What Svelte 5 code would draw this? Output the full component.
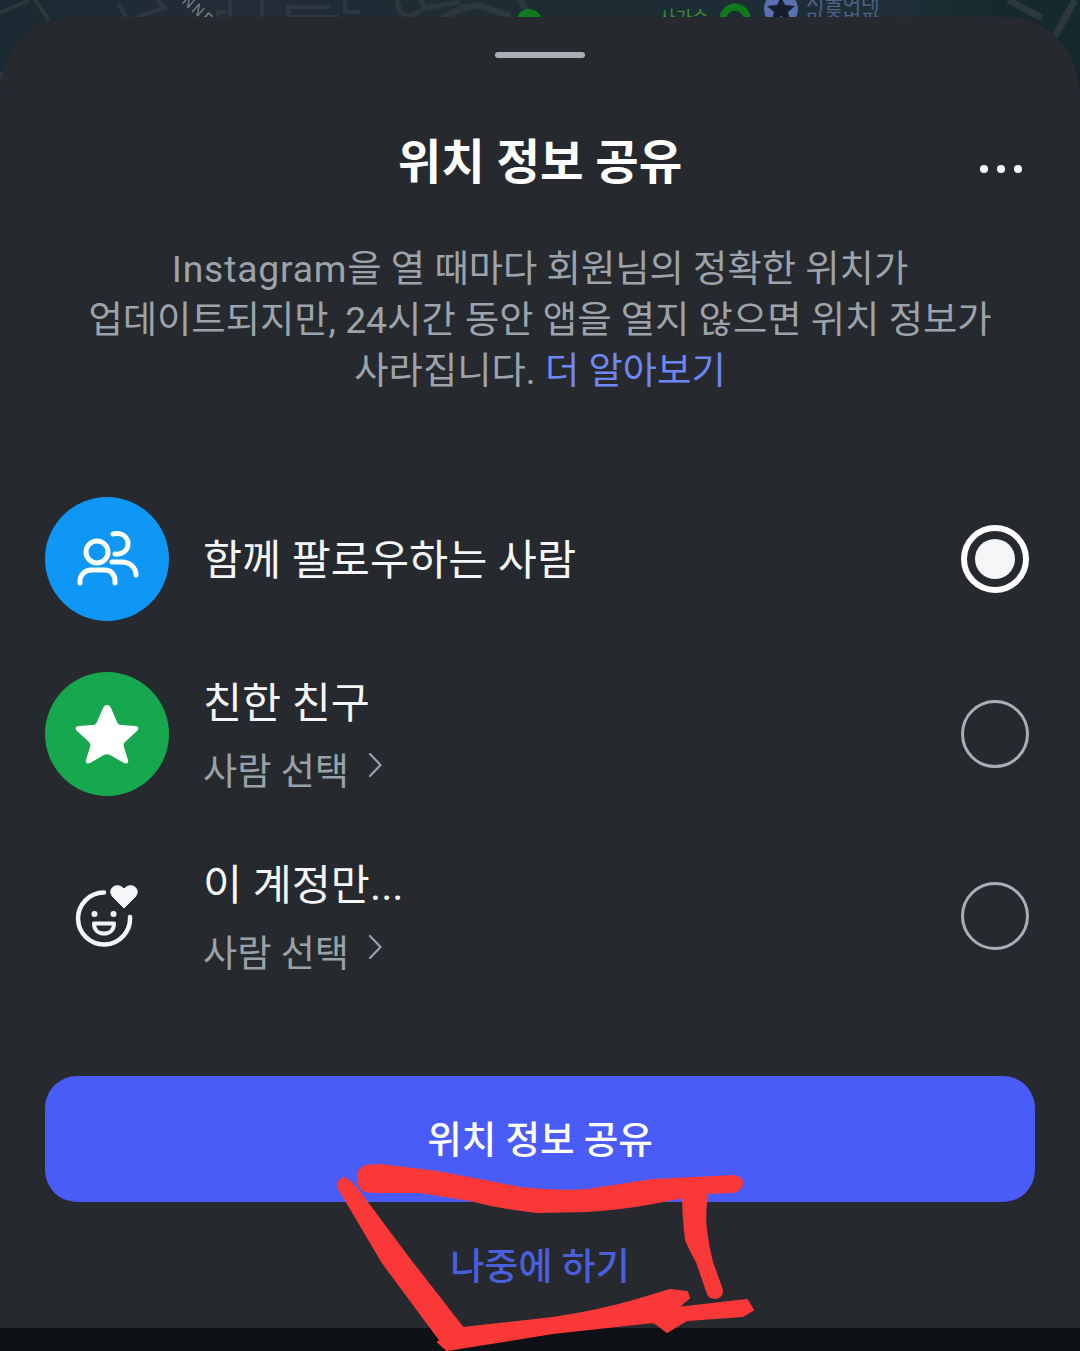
<script>
	const rows = [
		{ title: '함께 팔로우하는 사람', kind: 'people', selected: true },
		{ title: '친한 친구', sub: '사람 선택', kind: 'star' },
		{ title: '이 계정만...', sub: '사람 선택', kind: 'smile' }
	];
</script>

<div class="screen">
	<svg class="map" width="1080" height="110" viewBox="0 0 1080 110" fill="none">
		<defs>
			<linearGradient id="ground">
				<stop offset="0" stop-color="#1b2a32" />
				<stop offset="0.2" stop-color="#222c37" />
				<stop offset="0.5" stop-color="#1d2c33" />
				<stop offset="0.84" stop-color="#1f2e37" />
				<stop offset="0.93" stop-color="#15292c" />
			</linearGradient>
		</defs>
		<rect width="1080" height="110" fill="url(#ground)" />
		<g stroke="#2c3740" stroke-width="4">
			<path d="M0 13 L30 0 M35 0 L52 25 M0 72 L8 92" />
			<path d="M118 4 L128 20 L165 8 L157 0 M118 22 L128 20" />
			<path d="M218 20 V12 H226 M230 0 V20 M262 0 V20 M288 4 V20 M288 7 H330 M288 17 H340 M345 0 V12 H360" />
			<path d="M397 0 L400 12 L410 17 L425 8 L420 0 M425 8 L460 2" stroke-width="5" />
			<path d="M440 20 Q465 4 480 6 L510 16" stroke-width="7" />
			<path d="M520 0 L528 12" stroke-width="7" />
			<path d="M1008 0 L1042 18 M1075 0 L1050 45" stroke-width="7" />
		</g>
		<text class="maplabel road" transform="translate(181 2) rotate(42)">NNE</text>
		<path d="M516 22 A13 13 0 0 1 542 22 Z" fill="#117a1e" />
		<circle cx="735" cy="19" r="12" stroke="#117a1e" stroke-width="7" />
		<circle cx="781" cy="9" r="17" fill="#5a70b0" />
		<path d="M781 -3 L785 5 L795 6 L788 12 L790 21 L781 16 L772 21 L774 12 L767 6 L777 5 Z" fill="#141e2c" />
		<text class="maplabel green" x="659" y="24">사가슨</text>
		<text class="maplabel blue" x="806" y="9">서울여대</text>
		<text class="maplabel blue" x="806" y="28">마중벽판</text>
	</svg>

	<main class="sheet">
		<div class="handle"></div>

		<header>
			<h1>위치 정보 공유</h1>
			<button class="more" aria-label="더보기"><i></i><i></i><i></i></button>
		</header>

		<p class="desc">
			<span class="brand">Instagram</span>을 열 때마다 회원님의 정확한 위치가<br />
			업데이트되지만, 24시간 동안 앱을 열지 않으면 위치 정보가<br />
			사라집니다. <a href="#more">더 알아보기</a>
		</p>

		<ul class="options">
			{#each rows as row}
				<li class="option" class:two={row.sub}>
					<div class="badge {row.kind}">
						{#if row.kind === 'people'}
							<svg width="66" height="56" viewBox="0 0 66 56" fill="none" stroke="#fff" stroke-width="5" stroke-linecap="round">
								<circle cx="23" cy="21" r="11" />
								<path d="M6 52 V50 C6 44 11 39 17 39 H31 C37 39 41 44 41 50 V52" />
								<path d="M39 3 C47 1 54 5 54 13 C54 20 47 24 41 23" />
								<path d="M38 31 H48 C56 31 62 37 62 44" />
							</svg>
						{:else if row.kind === 'star'}
							<svg width="64" height="60" viewBox="0 0 64 60">
								<path d="M32 1 C34 1 35 2 36 4 L42 18 C43 20 44 21 46 21 L60 22 C64 22 64 25 62 27 L50 38 C49 39 48 41 49 43 L53 56 C54 59 52 60 49 59 L35 51 C33 50 31 50 29 51 L15 59 C12 60 10 59 11 56 L15 43 C16 41 15 39 14 38 L2 27 C0 25 0 22 4 22 L18 21 C20 21 21 20 22 18 L28 4 C29 2 30 1 32 1 Z" fill="#fff" />
							</svg>
						{:else}
							<svg width="66" height="62" viewBox="0 -1 66 62" fill="none">
								<path d="M30 6.500 A26 26 0 1 0 56 31" stroke="#f5f6f7" stroke-width="4.500" stroke-linecap="round" />
								<circle cx="20.500" cy="28" r="3" fill="#f5f6f7" />
								<circle cx="39.500" cy="28" r="3" fill="#f5f6f7" />
								<path d="M20 37.500 H40 C40 44 35.500 47.500 30 47.500 C24.500 47.500 20 44 20 37.500 Z" stroke="#f5f6f7" stroke-width="4" stroke-linejoin="round" />
								<path d="M50 22 L39 11 C32 3 43 -5 50 3 C57 -5 68 3 61 11 Z" fill="#f5f6f7" stroke="#f5f6f7" stroke-linejoin="round" />
							</svg>
						{/if}
					</div>
					<div class="label">
						<div class="title">{row.title}</div>
						{#if row.sub}
							<div class="sub">
								{row.sub}
								<svg width="14" height="26" viewBox="0 0 14 26" fill="none" stroke="#9aa1a9" stroke-width="2.200" stroke-linecap="round" stroke-linejoin="round">
									<path d="M2 2 L12.500 13 L2 24" />
								</svg>
							</div>
						{/if}
					</div>
					<div class="radio" class:on={row.selected}></div>
				</li>
			{/each}
		</ul>

		<button class="primary">위치 정보 공유</button>
		<button class="later">나중에 하기</button>
	</main>

	<div class="navbar"></div>

	<svg class="scribble" width="1080" height="1351" viewBox="0 0 1080 1351" fill="#fa3838" stroke="#fa3838" stroke-width="2" stroke-linejoin="round">
		<path d="M363 1167 Q370 1165 380 1165 L437 1172 Q480 1180 520 1188 Q555 1192 587 1190 L653 1180 L733 1176 Q742 1177 742 1183 Q742 1190 733 1192 L703 1193 L653 1203 Q620 1209 587 1211 L537 1212 Q500 1208 470 1200 L420 1192 L377 1192 Q366 1192 363 1190 Q357 1184 358 1178 Q358 1170 363 1167 Z" />
		<path d="M683 1195 L707 1195 Q704 1215 706 1230 Q708 1247 712 1262 L722 1290 Q722 1297 716 1298 Q710 1298 708 1294 L697 1262 Q690 1250 686 1240 Q683 1215 683 1195 Z" />
		<path d="M344 1178 Q352 1182 360 1193 L410 1260 L463 1328 L440 1340 L383 1263 L338 1187 Q338 1180 344 1178 Z" />
		<path d="M463 1328 L553 1318 Q600 1311 637 1300 L670 1290 L687 1292 L689 1298 L677 1308 L747 1300 L753 1310 L743 1316 L687 1320 L667 1332 L658 1325 L653 1322 L553 1333 L447 1350 L438 1342 Z" />
	</svg>
</div>

<style>
	:global(body) {
		margin: 0;
		background: #1a2a2e;
	}

	.screen {
		position: relative;
		width: 1080px;
		height: 1351px;
		overflow: hidden;
		display: flex;
		flex-direction: column;
		background: #1c2b32;
		font-family: Roboto, "Noto Sans CJK KR", sans-serif;
	}

	.map {
		position: absolute;
		top: 0;
		left: 0;
	}

	.maplabel {
		font-size: 20px;
		font-family: "Noto Sans CJK KR", sans-serif;
	}

	.road {
		fill: #7c8286;
		font-size: 15px;
		letter-spacing: 2px;
	}

	.green {
		fill: #3a8a2e;
		font-size: 18px;
	}

	.blue {
		fill: #4f6288;
	}

	.sheet {
		position: relative;
		margin-top: 17px;
		height: 1311px;
		box-sizing: border-box;
		background: #26292e;
		border-radius: 70px 70px 0 0 / 80px 80px 0 0;
		padding: 35px 45px 0;
		display: flex;
		flex-direction: column;
		align-items: center;
	}

	.handle {
		width: 90px;
		height: 6px;
		border-radius: 3px;
		background: #a8afb8;
	}

	header {
		position: relative;
		width: 100%;
		margin-top: 75px;
		display: flex;
		justify-content: center;
	}

	h1 {
		margin: 0;
		font-size: 47.300px;
		line-height: 60px;
		font-weight: 700;
		color: #fff;
	}

	.more {
		position: absolute;
		right: 13px;
		top: 32px;
		display: flex;
		gap: 9px;
		padding: 0;
		border: 0;
		background: none;
	}

	.more i {
		width: 8px;
		height: 8px;
		border-radius: 50%;
		background: #fff;
	}

	.desc {
		margin: 51px 0 0;
		font-size: 37.300px;
		line-height: 51px;
		color: #9ca3ab;
		text-align: center;
		white-space: nowrap;
	}

	.brand {
		letter-spacing: 0.8px;
	}

	.desc a {
		color: #6f86f5;
		text-decoration: none;
	}

	.options {
		list-style: none;
		margin: 100px 0 0;
		padding: 0;
		width: 100%;
	}

	.option {
		display: flex;
		align-items: center;
		height: 124px;
		margin-bottom: 48px;
	}

	.option.two {
		height: 130px;
		margin-bottom: 52px;
	}

	.badge {
		flex: none;
		width: 124px;
		height: 124px;
		border-radius: 50%;
		display: flex;
		align-items: center;
		justify-content: center;
	}

	.people {
		background: #0f97f5;
	}

	.star {
		background: #17a74f;
	}

	.label {
		flex: 1;
		margin-left: 34px;
		margin-top: 4px;
	}

	.two .label {
		margin-top: 7px;
	}

	.title {
		font-size: 42.500px;
		line-height: 50px;
		color: #f5f6f7;
	}

	.sub {
		margin-top: 18px;
		display: flex;
		align-items: center;
		gap: 19px;
		font-size: 37.200px;
		line-height: 50px;
		color: #9aa1a9;
	}

	.sub svg {
		margin-top: -13px;
	}

	.radio {
		flex: none;
		width: 68px;
		height: 68px;
		margin-right: 6px;
		box-sizing: border-box;
		border-radius: 50%;
		border: 3px solid #a8afb8;
	}

	.radio.on {
		border: 6px solid #fff;
		background: #f5f6f7;
		background-clip: content-box;
		padding: 8px;
	}

	.primary {
		flex: none;
		width: 100%;
		height: 126px;
		margin-top: auto;
		padding-bottom: 7px;
		border: 0;
		border-radius: 32px;
		background: #4a5cf8;
		color: #fff;
		font: 500 37.500px Roboto, "Noto Sans CJK KR", sans-serif;
	}

	.later {
		flex: none;
		height: 126px;
		padding-bottom: 4px;
		border: 0;
		background: none;
		color: #4a5fdc;
		font: 500 37px Roboto, "Noto Sans CJK KR", sans-serif;
	}

	.navbar {
		height: 23px;
		background: #0e1115;
	}

	.scribble {
		position: absolute;
		top: 0;
		left: 0;
	}
</style>
